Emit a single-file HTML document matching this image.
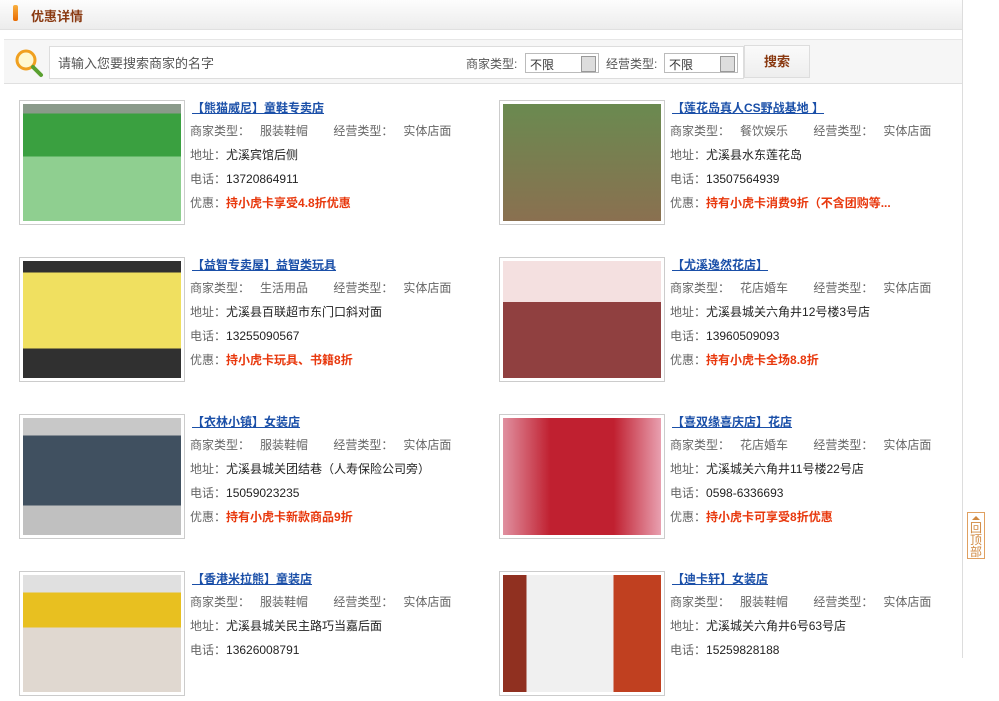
<!DOCTYPE html>
<html><head><meta charset="utf-8"><style>
*{margin:0;padding:0;box-sizing:border-box}
body{width:999px;height:658px;overflow:hidden;background:#fff;font-family:"Liberation Sans","Noto Sans CJK SC",sans-serif;font-size:12px;color:#666;position:relative}
.wrap{position:absolute;left:0;top:0;width:963px;height:658px;border-right:1px solid #ddd}
.hd{height:30px;background:linear-gradient(#fdfdfd,#ececec);border-bottom:1px solid #e0e0e0;position:relative}
.hd i{position:absolute;left:13px;top:5px;width:5px;height:16px;background:linear-gradient(#f9b040,#e86a00);border-radius:2px}
.hd b{position:absolute;left:31px;top:6px;font-size:13px;color:#8a3a12}
.sb{position:absolute;left:4px;top:39px;width:958px;height:45px;background:#f6f6f6;border-top:1px solid #e6e6e6;border-bottom:1px solid #e0e0e0}
.ic{position:absolute;left:10px;top:8px}
.inp{position:absolute;left:45px;top:6px;width:695px;height:33px;background:#fff;border:1px solid #ddd;padding:6px 8px;font-size:13px;color:#555}
.lb{position:absolute;top:15px;color:#555}
.sel{position:absolute;top:13px;width:74px;height:20px;border:1px solid #bbb;background:#fff;padding:2px 4px;color:#333}
.sel:after{content:"";position:absolute;right:2px;top:2px;width:13px;height:14px;background:#ddd;border:1px solid #999}
.btn{position:absolute;left:740px;top:5px;width:66px;height:33px;border:1px solid #ddd;background:linear-gradient(#fafafa,#eee);color:#8a3a12;font-weight:bold;font-size:13px;text-align:center;line-height:31px}
.it{position:absolute;width:470px;height:130px}
.img{position:absolute;left:0;top:0;width:166px;height:125px;border:1px solid #ccc;padding:3px;background:#fff}
.img div{width:100%;height:100%}
.tx{position:absolute;left:171px;top:0;line-height:24px;white-space:nowrap}
.tx a{color:#1a4fa8;font-weight:bold;text-decoration:underline;margin-left:2px;display:block;height:19px;line-height:16px}
.v{color:#222}.r{color:#e8380d;font-weight:bold}
.g{display:inline-block;width:70px}
.top{position:absolute;left:967px;top:512px;width:18px;height:47px;border:1px solid #e0a060;color:#d08840;font-size:12px;line-height:12px;text-align:center;padding-top:9px}
.top:before{content:"";position:absolute;left:4px;top:3px;border:4px solid transparent;border-bottom:4px solid #d08840;border-top:0}
</style></head><body>
<div class="wrap">
<div class="hd"><i></i><b>优惠详情</b></div>
<div class="sb">
<svg class="ic" width="30" height="30" viewBox="0 0 30 30"><circle cx="12" cy="12" r="9" fill="#fff8d0" stroke="#f0a020" stroke-width="3"/><line x1="19" y1="19" x2="27" y2="27" stroke="#5aa030" stroke-width="4" stroke-linecap="round"/></svg>
<div class="inp">请输入您要搜索商家的名字</div>
<span class="lb" style="left:462px">商家类型:</span><div class="sel" style="left:521px">不限</div>
<span class="lb" style="left:602px">经营类型:</span><div class="sel" style="left:660px">不限</div>
<div class="btn">搜索</div>
</div>

<div class="it" style="left:19px;top:100px"><div class="img"><div style="background:linear-gradient(#8a9a8a 0 8%,#3aa040 8% 45%,#8fcf90 45% 100%)"></div></div>
<div class="tx"><a>【熊猫威尼】童鞋专卖店</a>商家类型： &nbsp;&nbsp;<span class="g">服装鞋帽</span> 经营类型： &nbsp;&nbsp;实体店面<br>地址：<span class="v">尤溪宾馆后侧</span><br>电话：<span class="v">13720864911</span><br>优惠：<span class="r">持小虎卡享受4.8折优惠</span></div></div>

<div class="it" style="left:499px;top:100px"><div class="img"><div style="background:linear-gradient(#6a8a50,#8a7050)"></div></div>
<div class="tx"><a>【莲花岛真人CS野战基地 】</a>商家类型： &nbsp;&nbsp;<span class="g">餐饮娱乐</span> 经营类型： &nbsp;&nbsp;实体店面<br>地址：<span class="v">尤溪县水东莲花岛</span><br>电话：<span class="v">13507564939</span><br>优惠：<span class="r">持有小虎卡消费9折（不含团购等...</span></div></div>

<div class="it" style="left:19px;top:257px"><div class="img"><div style="background:linear-gradient(#303030 0 10%,#f0e060 10% 75%,#303030 75%)"></div></div>
<div class="tx"><a>【益智专卖屋】益智类玩具</a>商家类型： &nbsp;&nbsp;<span class="g">生活用品</span> 经营类型： &nbsp;&nbsp;实体店面<br>地址：<span class="v">尤溪县百联超市东门口斜对面</span><br>电话：<span class="v">13255090567</span><br>优惠：<span class="r">持小虎卡玩具、书籍8折</span></div></div>

<div class="it" style="left:499px;top:257px"><div class="img"><div style="background:linear-gradient(#f4e0e0 0 35%,#904040 35% 100%)"></div></div>
<div class="tx"><a>【尤溪逸然花店】</a>商家类型： &nbsp;&nbsp;<span class="g">花店婚车</span> 经营类型： &nbsp;&nbsp;实体店面<br>地址：<span class="v">尤溪县城关六角井12号楼3号店</span><br>电话：<span class="v">13960509093</span><br>优惠：<span class="r">持有小虎卡全场8.8折</span></div></div>

<div class="it" style="left:19px;top:414px"><div class="img"><div style="background:linear-gradient(#c8c8c8 0 15%,#405060 15% 75%,#c0c0c0 75%)"></div></div>
<div class="tx"><a>【衣林小镇】女装店</a>商家类型： &nbsp;&nbsp;<span class="g">服装鞋帽</span> 经营类型： &nbsp;&nbsp;实体店面<br>地址：<span class="v">尤溪县城关团结巷（人寿保险公司旁）</span><br>电话：<span class="v">15059023235</span><br>优惠：<span class="r">持有小虎卡新款商品9折</span></div></div>

<div class="it" style="left:499px;top:414px"><div class="img"><div style="background:linear-gradient(90deg,#e090a0,#c02030 30%,#c02030 70%,#e8a0b0)"></div></div>
<div class="tx"><a>【喜双缘喜庆店】花店</a>商家类型： &nbsp;&nbsp;<span class="g">花店婚车</span> 经营类型： &nbsp;&nbsp;实体店面<br>地址：<span class="v">尤溪城关六角井11号楼22号店</span><br>电话：<span class="v">0598-6336693</span><br>优惠：<span class="r">持小虎卡可享受8折优惠</span></div></div>

<div class="it" style="left:19px;top:571px"><div class="img"><div style="background:linear-gradient(#e0e0e0 0 15%,#e8c020 15% 45%,#e0d8d0 45%)"></div></div>
<div class="tx"><a>【香港米拉熊】童装店</a>商家类型： &nbsp;&nbsp;<span class="g">服装鞋帽</span> 经营类型： &nbsp;&nbsp;实体店面<br>地址：<span class="v">尤溪县城关民主路巧当嘉后面</span><br>电话：<span class="v">13626008791</span></div></div>

<div class="it" style="left:499px;top:571px"><div class="img"><div style="background:linear-gradient(90deg,#903020 0 15%,#f0f0f0 15% 70%,#c04020 70%)"></div></div>
<div class="tx"><a>【迪卡轩】女装店</a>商家类型： &nbsp;&nbsp;<span class="g">服装鞋帽</span> 经营类型： &nbsp;&nbsp;实体店面<br>地址：<span class="v">尤溪城关六角井6号63号店</span><br>电话：<span class="v">15259828188</span></div></div>
</div>
<div class="top">回<br>顶<br>部</div>
</body></html>
